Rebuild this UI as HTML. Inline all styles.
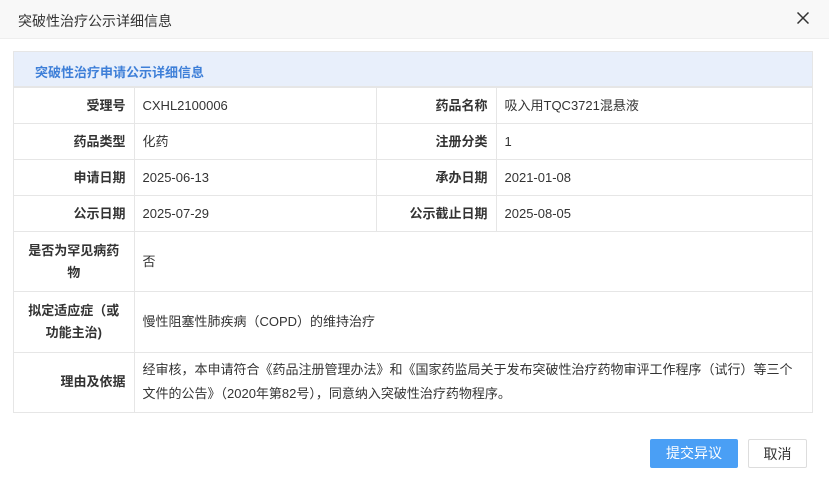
<!DOCTYPE html>
<html><head><meta charset="utf-8"><style>
*{margin:0;padding:0;box-sizing:border-box}
body{width:829px;height:480px;background:#fff;font-family:"Liberation Sans","Noto Sans CJK SC",sans-serif;font-size:13px;color:#333;position:relative;overflow:hidden}
.hd{position:absolute;left:0;top:0;width:829px;height:39px;background:#f8f8f8;border-bottom:1px solid #eee}
.hd span{position:absolute;left:18px;top:11px;font-size:14px;color:#333}
.x{position:absolute;left:797px;top:12px;width:12px;height:12px}
.box{position:absolute;left:13px;top:51px;width:800px;border:1px solid #e6e6e6}
.tt{height:35px;background:#e8effb;color:#3e7fd8;font-weight:bold;font-size:13px;padding:10px 0 0 21px;border-bottom:1px solid #e6e6e6}
table{border-collapse:collapse;width:100%}
td{border:1px solid #e6e6e6;height:36px;padding:0 8px;line-height:20px}
tr td:first-child{border-left:none}tr td:last-child{border-right:none}
tr:last-child td{border-bottom:none}
.l{text-align:right;font-weight:bold;color:#333;width:120px;padding-right:8px}
.btn{position:absolute;top:439px;height:29px;font-size:14px;text-align:center;line-height:29px;border-radius:2px}
</style></head><body>
<div class="hd"><span>突破性治疗公示详细信息</span>
<svg class="x" viewBox="0 0 12 12"><path d="M0.5 0.5L11.5 11.5M11.5 0.5L0.5 11.5" stroke="#333" stroke-width="1.5"/></svg></div>
<div class="box">
<div class="tt">突破性治疗申请公示详细信息</div>
<table>
<tr><td class="l">受理号</td><td style="width:242px">CXHL2100006</td><td class="l">药品名称</td><td>吸入用TQC3721混悬液</td></tr>
<tr><td class="l">药品类型</td><td>化药</td><td class="l">注册分类</td><td>1</td></tr>
<tr><td class="l">申请日期</td><td>2025-06-13</td><td class="l">承办日期</td><td>2021-01-08</td></tr>
<tr><td class="l">公示日期</td><td>2025-07-29</td><td class="l">公示截止日期</td><td>2025-08-05</td></tr>
<tr><td class="l" style="height:60px;text-align:center;line-height:22px">是否为罕见病药物</td><td colspan="3">否</td></tr>
<tr><td class="l" style="height:61px;text-align:center;line-height:22px">拟定适应症（或功能主治)</td><td colspan="3">慢性阻塞性肺疾病（COPD）的维持治疗</td></tr>
<tr><td class="l" style="height:59px">理由及依据</td><td colspan="3" style="line-height:24px">经审核，本申请符合《药品注册管理办法》和《国家药监局关于发布突破性治疗药物审评工作程序（试行）等三个文件的公告》（2020年第82号），同意纳入突破性治疗药物程序。</td></tr>
</table></div>
<div class="btn" style="left:650px;width:88px;background:#4a9ff5;color:#fff">提交异议</div>
<div class="btn" style="left:748px;width:59px;border:1px solid #ddd;color:#333">取消</div>
</body></html>
